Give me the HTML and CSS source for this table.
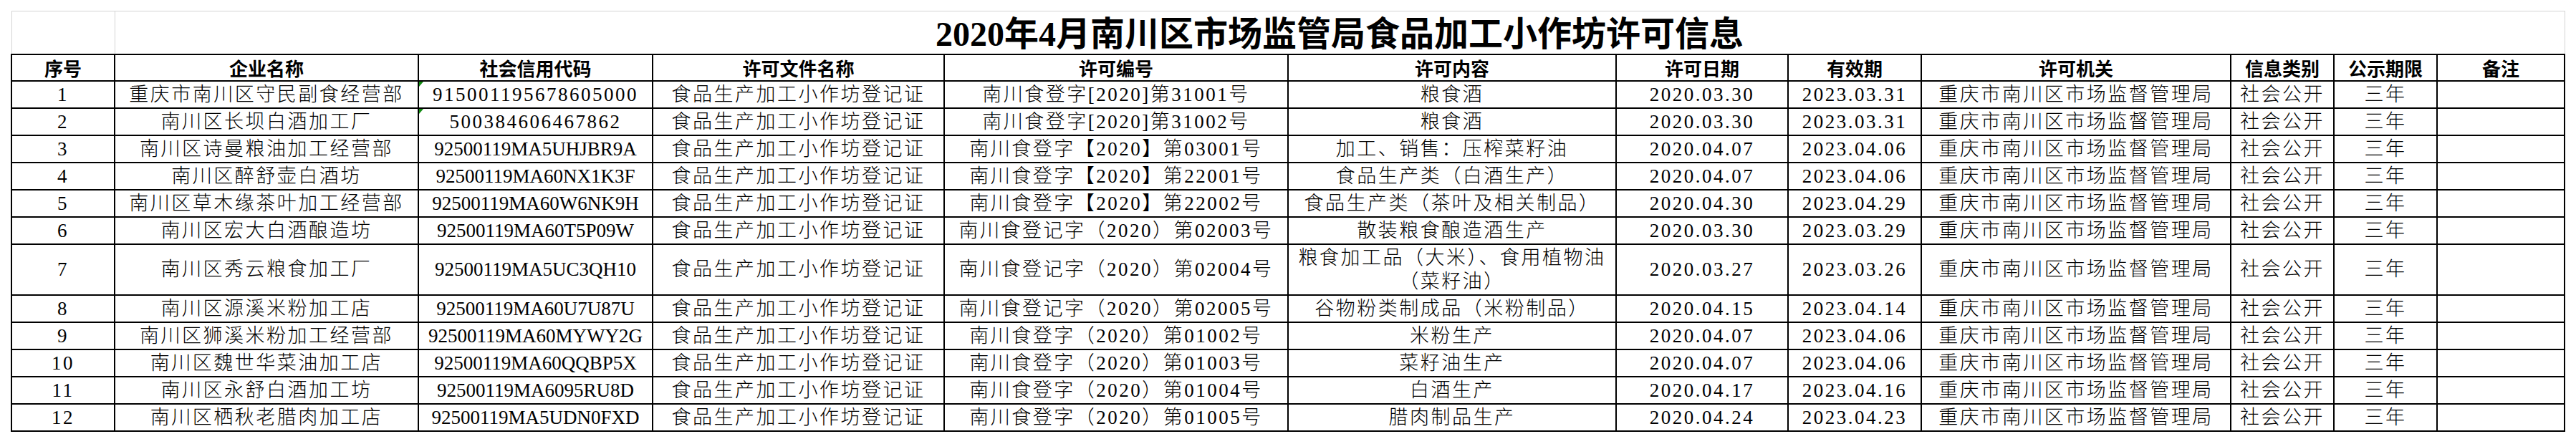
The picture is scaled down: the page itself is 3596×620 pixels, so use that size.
FILE: index.html
```html
<!DOCTYPE html>
<html lang="zh-CN">
<head>
<meta charset="utf-8">
<title>2020年4月南川区市场监管局食品加工小作坊许可信息</title>
<link rel="stylesheet" href="styles.css">
</head>
<body>
<div class="sheet">
<table class="grid">
<colgroup>
<col class="c-no"><col class="c-name"><col class="c-code"><col class="c-doc"><col class="c-num"><col class="c-content"><col class="c-date"><col class="c-valid"><col class="c-org"><col class="c-type"><col class="c-term"><col class="c-note">
</colgroup>
<tbody>
<tr class="title-row"><td></td><td colspan="11" class="title">2020年4月南川区市场监管局食品加工小作坊许可信息</td></tr>
<tr class="head"><th>序号</th><th>企业名称</th><th>社会信用代码</th><th>许可文件名称</th><th>许可编号</th><th>许可内容</th><th>许可日期</th><th>有效期</th><th>许可机关</th><th>信息类别</th><th>公示期限</th><th>备注</th></tr>
<tr class="row"><td>1</td><td>重庆市南川区守民副食经营部</td><td class="txtnum">915001195678605000</td><td>食品生产加工小作坊登记证</td><td>南川食登字[2020]第31001号</td><td>粮食酒</td><td>2020.03.30</td><td>2023.03.31</td><td>重庆市南川区市场监督管理局</td><td>社会公开</td><td>三年</td><td></td></tr>
<tr class="row"><td>2</td><td>南川区长坝白酒加工厂</td><td class="txtnum">500384606467862</td><td>食品生产加工小作坊登记证</td><td>南川食登字[2020]第31002号</td><td>粮食酒</td><td>2020.03.30</td><td>2023.03.31</td><td>重庆市南川区市场监督管理局</td><td>社会公开</td><td>三年</td><td></td></tr>
<tr class="row"><td>3</td><td>南川区诗曼粮油加工经营部</td><td class="code">92500119MA5UHJBR9A</td><td>食品生产加工小作坊登记证</td><td>南川食登字【2020】第03001号</td><td>加工、销售：压榨菜籽油</td><td>2020.04.07</td><td>2023.04.06</td><td>重庆市南川区市场监督管理局</td><td>社会公开</td><td>三年</td><td></td></tr>
<tr class="row"><td>4</td><td>南川区醉舒壶白酒坊</td><td class="code">92500119MA60NX1K3F</td><td>食品生产加工小作坊登记证</td><td>南川食登字【2020】第22001号</td><td>食品生产类（白酒生产）</td><td>2020.04.07</td><td>2023.04.06</td><td>重庆市南川区市场监督管理局</td><td>社会公开</td><td>三年</td><td></td></tr>
<tr class="row"><td>5</td><td>南川区草木缘茶叶加工经营部</td><td class="code">92500119MA60W6NK9H</td><td>食品生产加工小作坊登记证</td><td>南川食登字【2020】第22002号</td><td>食品生产类（茶叶及相关制品）</td><td>2020.04.30</td><td>2023.04.29</td><td>重庆市南川区市场监督管理局</td><td>社会公开</td><td>三年</td><td></td></tr>
<tr class="row"><td>6</td><td>南川区宏大白酒酿造坊</td><td class="code">92500119MA60T5P09W</td><td>食品生产加工小作坊登记证</td><td>南川食登记字（2020）第02003号</td><td>散装粮食酿造酒生产</td><td>2020.03.30</td><td>2023.03.29</td><td>重庆市南川区市场监督管理局</td><td>社会公开</td><td>三年</td><td></td></tr>
<tr class="row tall"><td>7</td><td>南川区秀云粮食加工厂</td><td class="code">92500119MA5UC3QH10</td><td>食品生产加工小作坊登记证</td><td>南川食登记字（2020）第02004号</td><td>粮食加工品（大米）、食用植物油<br>（菜籽油）</td><td>2020.03.27</td><td>2023.03.26</td><td>重庆市南川区市场监督管理局</td><td>社会公开</td><td>三年</td><td></td></tr>
<tr class="row"><td>8</td><td>南川区源溪米粉加工店</td><td class="code">92500119MA60U7U87U</td><td>食品生产加工小作坊登记证</td><td>南川食登记字（2020）第02005号</td><td>谷物粉类制成品（米粉制品）</td><td>2020.04.15</td><td>2023.04.14</td><td>重庆市南川区市场监督管理局</td><td>社会公开</td><td>三年</td><td></td></tr>
<tr class="row"><td>9</td><td>南川区狮溪米粉加工经营部</td><td class="code">92500119MA60MYWY2G</td><td>食品生产加工小作坊登记证</td><td>南川食登字（2020）第01002号</td><td>米粉生产</td><td>2020.04.07</td><td>2023.04.06</td><td>重庆市南川区市场监督管理局</td><td>社会公开</td><td>三年</td><td></td></tr>
<tr class="row"><td>10</td><td>南川区魏世华菜油加工店</td><td class="code">92500119MA60QQBP5X</td><td>食品生产加工小作坊登记证</td><td>南川食登字（2020）第01003号</td><td>菜籽油生产</td><td>2020.04.07</td><td>2023.04.06</td><td>重庆市南川区市场监督管理局</td><td>社会公开</td><td>三年</td><td></td></tr>
<tr class="row"><td>11</td><td>南川区永舒白酒加工坊</td><td class="code">92500119MA6095RU8D</td><td>食品生产加工小作坊登记证</td><td>南川食登字（2020）第01004号</td><td>白酒生产</td><td>2020.04.17</td><td>2023.04.16</td><td>重庆市南川区市场监督管理局</td><td>社会公开</td><td>三年</td><td></td></tr>
<tr class="row"><td>12</td><td>南川区栖秋老腊肉加工店</td><td class="code">92500119MA5UDN0FXD</td><td>食品生产加工小作坊登记证</td><td>南川食登字（2020）第01005号</td><td>腊肉制品生产</td><td>2020.04.24</td><td>2023.04.23</td><td>重庆市南川区市场监督管理局</td><td>社会公开</td><td>三年</td><td></td></tr>
</tbody>
</table>
</div>
</body>
</html>
```
FILE: styles.css
```css
html, body {
  margin: 0;
  background: #fff;
}
body {
  font-family: "Liberation Serif", "Noto Sans CJK SC", serif;
  color: #000;
}
.sheet {
  padding: 15px 0 0 15px;
}
.grid {
  border-collapse: collapse;
  table-layout: fixed;
  width: 3566px;
}
.c-no { width: 144px; }
.c-name { width: 424px; }
.c-code { width: 327px; }
.c-doc { width: 407px; }
.c-num { width: 480px; }
.c-content { width: 458px; }
.c-date { width: 240px; }
.c-valid { width: 186px; }
.c-org { width: 432px; }
.c-type { width: 144px; }
.c-term { width: 144px; }
.c-note { width: 178px; }

.grid td, .grid th {
  border: 2px solid #000;
  padding: 0;
  text-align: center;
  vertical-align: middle;
  white-space: nowrap;
  overflow: visible;
}
.title-row td {
  border: 1px solid #d4d4d4;
  border-bottom: 2px solid #000;
  height: 59px;
  vertical-align: bottom;
}
.title-row .title {
  font-family: "Liberation Serif", "Noto Sans CJK SC", serif;
  font-size: 48px;
  font-weight: 700;
  line-height: 54px;
}
.head th {
  height: 35px;
  font-family: "Noto Sans CJK SC", sans-serif;
  font-size: 26px;
  font-weight: 700;
  line-height: 32px;
}
.row td {
  height: 36px;
  font-size: 27px;
  font-weight: 300;
  letter-spacing: 2.5px;
  line-height: 33px;
}
.row.tall td {
  height: 69px;
}
.row td.code {
  letter-spacing: 0;
}
.row td.txtnum {
  position: relative;
}
.row td.txtnum::before {
  content: "";
  position: absolute;
  top: 0;
  left: 0;
  border-top: 7px solid #118a11;
  border-right: 6px solid transparent;
}
```
